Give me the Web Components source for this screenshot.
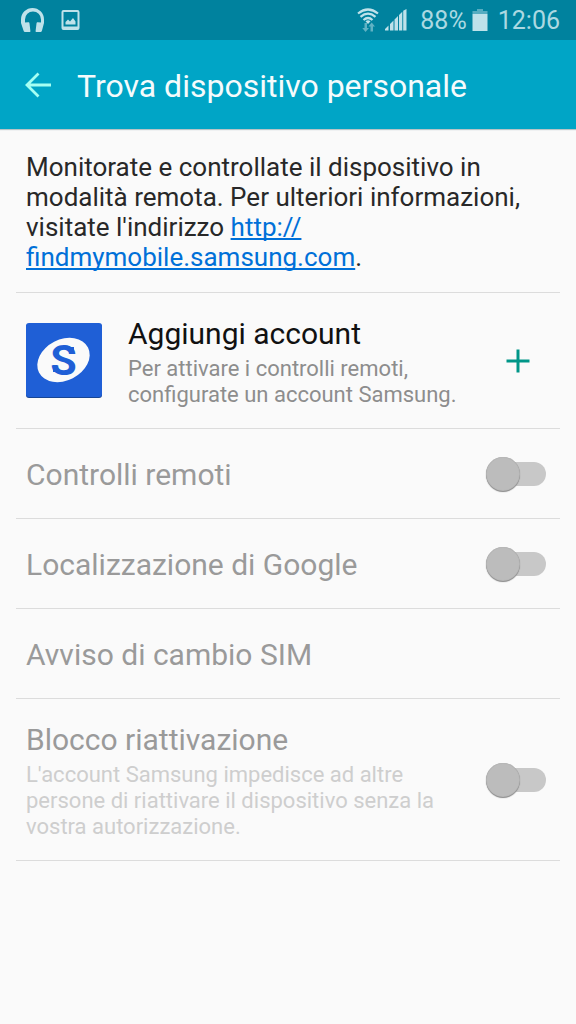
<!DOCTYPE html>
<html lang="it">
<head>
<meta charset="utf-8">
<meta name="viewport" content="width=device-width, initial-scale=1">
<title>Trova dispositivo personale</title>
<style>
  html { background: #fafafa; }
  body { margin: 0; font-family: Roboto, "Liberation Sans", sans-serif; }
</style>
</head>
<body>
<find-device-screen></find-device-screen>

<template id="status-bar">
  <style>
    :host { display: flex; justify-content: space-between; align-items: center; height: 40px; padding: 0 16px 0 20px; background: #00829e; color: #bfe2ea; font-size: 25px; line-height: 40px; }
    div { display: flex; align-items: center; }
    .left { gap: 16px; }
    svg { display: block; fill: currentColor; }
    .battery { margin: 0 10px 0 5px; }
    .signal { margin: 0 13px 0 6px; }
    span { opacity: .9; padding-top: 2px; }
  </style>
  <div class="left">
    <svg width="25" height="26" viewBox="0 0 25 26" role="img" aria-label="Cuffie"><path d="M1 16V12.500a11.500 11.500 0 0 1 23 0V16l-2 7.500c-.3 1-.9 1.500-2 1.500h-3.500c-.7 0-1-.4-.9-1l.9-7.500c.1-.8.6-1.300 1.300-1.200l3.200.3V12.500a8 8 0 0 0-16 0v3.100l3.200-.3c.8-.1 1.200.4 1.300 1.200l.9 7.500c.1.600-.2 1-.9 1H5.500c-1 0-1.700-.5-2-1.500z"/></svg>
    <svg width="20" height="22" viewBox="0 0 20 22" role="img" aria-label="Immagine"><path fill-rule="evenodd" d="M2.500 1h14a2 2 0 0 1 2 2v16a2 2 0 0 1-2 2h-14a2 2 0 0 1-2-2V3a2 2 0 0 1 2-2zM2.500 3v14.500h14V3zM4.500 15.500V13l2.500-2.500 2 2 3-3.500 2.500 3.500v3z"/></svg>
  </div>
  <div>
    <svg width="22" height="24" viewBox="0 0 22 24" role="img" aria-label="Wi-Fi"><g fill="none" stroke="currentColor" stroke-width="2.200"><path d="M1 5.500Q11-2.500 21 5.500M3.500 8.800Q11 2.500 18.500 8.800M6.500 12Q11 8 15.500 12"/></g><path d="M8.500 13.200Q11 11.200 13.500 13.200L11 16z"/><path opacity=".5" d="M7.500 15h2.500v5h2l-3.500 4-3.200-4h2.200zM13.500 23.500v-5h-2l3.200-4 3.300 4h-2v5z"/></svg>
    <svg class="signal" width="22" height="22" viewBox="0 0 22 22" role="img" aria-label="Segnale"><path d="M0 21.500V20l3.500-3.500v5zM5 21.500V15l3.500-3.500v10zM9.500 21.500v-11L13 7v14.500zM14 21.500V6l3.300-3.300v18.800zM18.200 21.500V1.800L21.500 0v21.500z"/></svg>
    <span>88%</span>
    <svg class="battery" width="16" height="24" viewBox="0 0 16 24" role="img" aria-label="Batteria"><path opacity=".45" d="M5 1h6v2h4.500v3H.5V3H5z"/><path d="M.5 6h15v17H.5z"/></svg>
    <span>12:06</span>
  </div>
</template>

<template id="app-bar">
  <style>
    :host { display: flex; align-items: center; gap: 26px; height: 89px; padding: 0 25px; background: #00a5c6; color: #f5fbfc; box-shadow: 0 1px 1px #b8c4c6; }
    button { border: 0; padding: 0; background: none; color: #a5fff3; display: block; }
    svg { display: block; }
    h1 { margin: 0; padding-top: 2px; font-size: 32px; line-height: 40px; font-weight: 400; }
  </style>
  <button type="button" aria-label="Indietro"><svg width="26" height="26" viewBox="0 0 26 26" fill="none" stroke="currentColor" stroke-width="2.800"><path d="M13.500 1.500L2 13l11.500 11.500M2 13H26"/></svg></button>
  <h1><slot></slot></h1>
</template>

<template id="setting-row">
  <style>
    :host { display: flex; align-items: center; gap: 26px; min-height: 90px; box-sizing: border-box; padding: 0 14px 0 10px; border-bottom: 1px solid #dcdcdc; color: #9a9a9a; --sub: #cecece; }
    :host([tall]) { padding-top: 21px; padding-bottom: 20px; }
    :host([active]) { color: #111; --sub: #8d8d8d; }
    .text { flex: 1; min-width: 0; }
    h2 { margin: 0; font-size: 30px; line-height: 40px; font-weight: 400; }
    :host(:not([tall])) h2 { padding-top: 2px; }
    ::slotted(p) { margin: 2px 0 0; font-size: 22px; line-height: 26px; color: var(--sub); }
  </style>
  <slot name="icon"></slot>
  <div class="text"><h2><slot name="title"></slot></h2><slot></slot></div>
  <slot name="action"></slot>
</template>

<template id="toggle-switch">
  <style>
    :host { display: block; }
    input { appearance: none; display: flex; align-items: center; margin: 0; width: 60px; height: 36px; position: relative; }
    input::before { content: ""; flex: 1; height: 24px; margin-left: 11px; border-radius: 12px; background: #c8c8c8; }
    input::after { content: ""; position: absolute; left: 0; top: 1px; width: 34px; height: 34px; border-radius: 50%; background: #bcbcbc; box-shadow: inset 0 0 1px #888, 0 1px 1px #888; }
  </style>
  <input type="checkbox" role="switch" disabled>
</template>

<template id="account-logo">
  <style>:host, svg { display: block; }</style>
  <svg width="76" height="76" viewBox="0 0 76 76" role="img" aria-label="Account Samsung">
    <rect y="1" width="76" height="74" rx="3" fill="#174594"/>
    <rect width="76" height="74" rx="3" fill="#1f5fd6"/>
    <ellipse cx="37.500" cy="37" rx="27.500" ry="20.500" transform="rotate(-27 37.500 37)" fill="#fafafa"/>
    <g fill="#1f5fd6">
      <text x="37.500" y="52" text-anchor="middle" font-family="Roboto, sans-serif" font-weight="700" font-size="43">S</text>
      <path d="M44 24h4v7h-4zM27 42h4v7h-4z"/>
    </g>
  </svg>
</template>

<template id="find-device-screen">
  <style>
    :host { display: block; }
    main { padding: 0 16px; }
    .intro { margin: 0; padding: 23px 10px 20px; border-bottom: 1px solid #dcdcdc; color: #282828; font-size: 26px; line-height: 30px; }
    a { color: #0070d8; text-decoration-thickness: 2px; text-underline-offset: 2px; text-decoration-skip-ink: none; }
    button { border: 0; background: none; padding: 6px; color: #009688; display: block; margin-right: 10px; }
    button svg { display: block; }
  </style>
  <status-bar></status-bar>
  <header><app-bar>Trova dispositivo personale</app-bar></header>
  <main>
    <p class="intro">Monitorate e controllate il dispositivo in modalità remota. Per ulteriori informazioni, visitate l'indirizzo <a href="http://findmymobile.samsung.com">http://<wbr>findmymobile.samsung.com</a>.</p>
    <setting-row active tall>
      <account-logo slot="icon"></account-logo>
      <span slot="title">Aggiungi account</span>
      <p>Per attivare i controlli remoti, configurate un account Samsung.</p>
      <button slot="action" type="button" aria-label="Aggiungi account"><svg width="24" height="24" viewBox="0 0 24 24" stroke="currentColor" stroke-width="3"><path d="M12 .5v23M.5 12h23"/></svg></button>
    </setting-row>
    <setting-row><span slot="title">Controlli remoti</span><toggle-switch slot="action" label="Controlli remoti"></toggle-switch></setting-row>
    <setting-row><span slot="title">Localizzazione di Google</span><toggle-switch slot="action" label="Localizzazione di Google"></toggle-switch></setting-row>
    <setting-row><span slot="title">Avviso di cambio SIM</span></setting-row>
    <setting-row tall>
      <span slot="title">Blocco riattivazione</span>
      <p>L'account Samsung impedisce ad altre persone di riattivare il dispositivo senza la vostra autorizzazione.</p>
      <toggle-switch slot="action" label="Blocco riattivazione"></toggle-switch>
    </setting-row>
  </main>
</template>

<script>
  class TemplateElement extends HTMLElement {
    constructor() {
      super();
      const template = document.getElementById(this.localName);
      this.attachShadow({ mode: "open" }).append(document.importNode(template.content, true));
    }
  }
  class StatusBar extends TemplateElement {}
  class AppBar extends TemplateElement {}
  class SettingRow extends TemplateElement {}
  class AccountLogo extends TemplateElement {}
  class FindDeviceScreen extends TemplateElement {}
  class ToggleSwitch extends TemplateElement {
    connectedCallback() {
      this.shadowRoot.querySelector("input").setAttribute("aria-label", this.getAttribute("label"));
    }
  }
  customElements.define("status-bar", StatusBar);
  customElements.define("app-bar", AppBar);
  customElements.define("setting-row", SettingRow);
  customElements.define("toggle-switch", ToggleSwitch);
  customElements.define("account-logo", AccountLogo);
  customElements.define("find-device-screen", FindDeviceScreen);
</script>
</body>
</html>
